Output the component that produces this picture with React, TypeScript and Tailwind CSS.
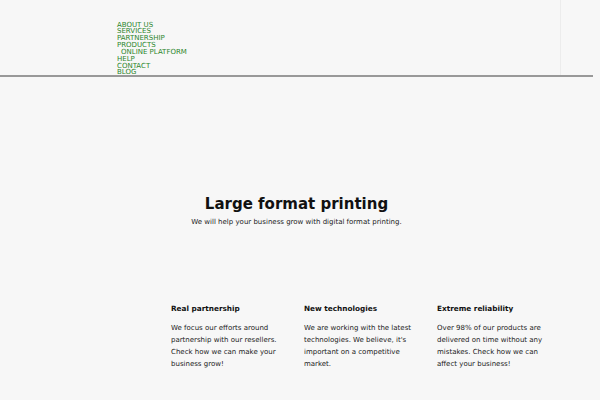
import React from "react";

const navItems = ["About us", "Services", "Partnership", "Products"];
const navItems2 = ["Help", "Contact", "Blog"];

const features = [
  {
    title: "Real partnership",
    text: "We focus our efforts around partnership with our resellers. Check how we can make your business grow!",
  },
  {
    title: "New technologies",
    text: "We are working with the latest technologies. We believe, it's important on a competitive market.",
  },
  {
    title: "Extreme reliability",
    text: "Over 98% of our products are delivered on time without any mistakes. Check how we can affect your business!",
  },
];

export default function App() {
  return (
    <div className="min-h-[400px] w-[600px] bg-[#f7f7f7] font-['DejaVu_Sans',sans-serif] text-[#111]">
      <header className="w-[593px] border-b-2 border-[#999]">
        <div className="h-[75px] w-[561px] border-r border-[#ececec] pl-[117px] pt-[21.5px]">
          <ul className="text-[7px] uppercase leading-[6.85px] text-[#2a852a]">
            {navItems.map((item) => (
              <li key={item}>{item}</li>
            ))}
            <li className="pl-[4px]">Online platform</li>
            {navItems2.map((item) => (
              <li key={item}>{item}</li>
            ))}
          </ul>
        </div>
      </header>

      <section className="flex w-[593px] flex-col items-center pt-[118px]">
        <h1 className="text-[15px] font-bold leading-[18px]">Large format printing</h1>
        <p className="mt-[4.5px] text-[7px] leading-[9px] text-[#222]">
          We will help your business grow with digital format printing.
        </p>
      </section>

      <section className="flex gap-[18px] pl-[171px] pt-[77px]">
        {features.map((f) => (
          <div key={f.title} className="w-[115px]">
            <h3 className="text-[7.3px] font-bold leading-[10px]">{f.title}</h3>
            <p className="mt-[8px] text-[7px] leading-[12px] text-[#222]">{f.text}</p>
          </div>
        ))}
      </section>
    </div>
  );
}
